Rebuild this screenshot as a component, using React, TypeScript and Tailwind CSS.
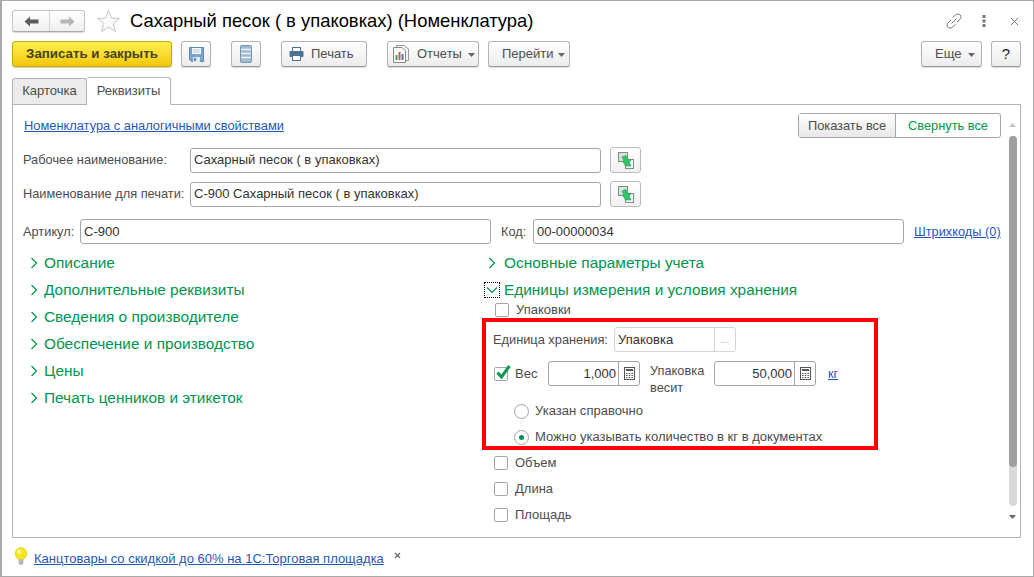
import React from 'react';

const FONT = "font-['Liberation_Sans',Arial,sans-serif]";

const Arrow = ({ flip, color }: { flip?: boolean; color: string }) => (
  <svg width="15" height="11" viewBox="0 0 15 11" className={flip ? 'rotate-180' : ''}>
    <path d="M0.5 5.5 L6 0.5 V3.5 H14.5 V7.5 H6 V10.5 Z" fill={color} />
  </svg>
);

const Caret = ({ className = 'ml-[7px]' }: { className?: string }) => (
  <svg width="7" height="4" viewBox="0 0 7 4" className={`mt-[1px] ${className}`}>
    <path d="M0 0 H7 L3.5 4 Z" fill="#666" />
  </svg>
);

const ToolButton = ({ className = '', children }: { className?: string; children: React.ReactNode }) => (
  <div className={`h-[26px] flex items-center rounded-[3px] border border-[#b4b4b4] border-b-[#999] bg-gradient-to-b from-white to-[#ececec] shadow-[0_1px_1px_rgba(0,0,0,0.15)] text-[13px] text-[#4d4d4d] ${className}`}>
    {children}
  </div>
);

const Field = ({ value, className = '' }: { value: string; className?: string }) => (
  <div className={`h-[25px] flex items-center px-[3px] rounded-[3px] border border-[#a5a5a5] bg-white text-[13px] text-[#333] ${className}`}>
    {value}
  </div>
);

const CopyButton = () => (
  <div className="ml-[9px] w-[31px] h-[26px] flex items-center justify-center rounded-[3px] border border-[#bbb] bg-gradient-to-b from-white to-[#f0f0f0]">
    <svg width="18" height="17" viewBox="0 0 18 17">
      <rect x="1.5" y="0.5" width="9" height="9" fill="#d8e2da" stroke="#7d8f84" />
      <rect x="8.5" y="7.5" width="8" height="9" fill="#f6f8f6" stroke="#7d8f84" />
      <path d="M5 5 L9 3.5 L10 7 L14 8.5 L12 9.5 L14 14 L8.5 14 L5.5 9 L7 8.5 Z" fill="#34c46c" stroke="#1f9a50" strokeWidth="0.6" />
    </svg>
  </div>
);

const Chevron = ({ open }: { open?: boolean }) => (
  <svg width="12" height="12" viewBox="0 0 12 12">
    {open ? (
      <path d="M1 3.5 L6 8.5 L11 3.5" fill="none" stroke="#00954a" strokeWidth="1.2" />
    ) : (
      <path d="M3.5 1 L8.5 6 L3.5 11" fill="none" stroke="#00954a" strokeWidth="1.2" />
    )}
  </svg>
);

const Group = ({ label }: { label: string }) => (
  <div className="h-[27px] flex items-center">
    <span className="w-[21px] pl-[5px] shrink-0"><Chevron /></span>
    <span className="text-[15.4px] text-[#00964f]">{label}</span>
  </div>
);

const Check = ({ label, checked }: { label: string; checked?: boolean }) => (
  <div className="flex items-center">
    <span className="relative w-[14px] h-[14px] rounded-[2px] border border-[#a5a5a5] bg-white shrink-0">
      {checked && (
        <svg width="17" height="16" viewBox="0 0 17 16" className="absolute left-[0px] top-[-4px]">
          <path d="M2.5 8.5 L6.5 13 L14.5 2" fill="none" stroke="#0b9a50" strokeWidth="3" />
        </svg>
      )}
    </span>
    <span className="ml-[7px] text-[13px] text-[#4d4d4d]">{label}</span>
  </div>
);

const Radio = ({ label, on }: { label: string; on?: boolean }) => (
  <div className="h-[26px] flex items-center">
    <span className="w-[15px] h-[15px] rounded-full border border-[#a5a5a5] flex items-center justify-center shrink-0">
      {on && <span className="w-[5px] h-[5px] rounded-full bg-[#0b8f4d]" />}
    </span>
    <span className="ml-[6px] text-[13.05px] text-[#4d4d4d]">{label}</span>
  </div>
);

const Calc = () => (
  <svg width="11" height="13" viewBox="0 0 11 13">
    <rect x="0.5" y="0.5" width="10" height="12" fill="none" stroke="#555" />
    <rect x="2" y="2" width="7" height="2" fill="#555" />
    <path d="M2 6h1.5v1H2zM4.8 6h1.5v1H4.8zM7.5 6H9v1H7.5zM2 8h1.5v1H2zM4.8 8h1.5v1H4.8zM7.5 8H9v1H7.5zM2 10h1.5v1H2zM4.8 10h1.5v1H4.8zM7.5 10H9v1H7.5z" fill="#555" />
  </svg>
);

const NumberField = ({ value, width, inner }: { value: string; width: string; inner: string }) => (
  <div className={`h-[25px] flex rounded-[3px] border border-[#a5a5a5] bg-white text-[13px] text-[#333] ${width}`}>
    <div className={`flex items-center justify-end pr-[2px] border-r border-[#a5a5a5] ${inner}`}>{value}</div>
    <div className="flex-1 flex items-center justify-center"><Calc /></div>
  </div>
);

export default function App() {
  return (
    <div className={`${FONT} w-[1034px] h-[577px] flex flex-col bg-white border border-[#a9a9a9] border-l-2 overflow-hidden`}>
      {/* title */}
      <div className="h-[39px] shrink-0 flex items-center pl-[10px] pr-[14px] pt-[1px]">
        <div className="w-[73px] h-[22px] flex rounded-[3px] border border-[#c4c4c4] border-b-[#aaa] bg-gradient-to-b from-white to-[#f0f0f0] shadow-[0_1px_1px_rgba(0,0,0,0.15)]">
          <div className="w-[37px] flex items-center justify-center border-r border-[#d4d4d4]"><Arrow color="#5c5c5c" /></div>
          <div className="flex-1 flex items-center justify-center"><Arrow flip color="#b5b5b5" /></div>
        </div>
        <svg width="25" height="24" viewBox="0 0 25 24" className="ml-[11px]">
          <path d="M12.5 1.5 L15.5 9 L23.5 9.5 L17.3 14.6 L19.4 22.5 L12.5 18.1 L5.6 22.5 L7.7 14.6 L1.5 9.5 L9.5 9 Z" fill="#fafafa" stroke="#c6c6c6" />
        </svg>
        <div className="ml-[9px] text-[18.4px] text-black">Сахарный песок ( в упаковках) (Номенклатура)</div>
        <div className="ml-auto flex items-center text-[#777]">
          <svg width="16" height="16" viewBox="0 0 16 16" fill="none" stroke="#777" strokeWidth="1">
            <path d="M6.5 4.5 L9.5 1.8 C11 0.6 13 0.8 14.2 2 C15.3 3.3 15.2 5 14 6.2 L11 9" />
            <path d="M9.5 11.5 L6.5 14.2 C5 15.4 3 15.2 1.8 14 C0.7 12.7 0.8 11 2 9.8 L5 7" />
            <path d="M5.5 10.5 L10.5 5.5" />
          </svg>
          <svg width="4" height="12" viewBox="0 0 4 12" className="ml-[20px]">
            <rect x="0.5" width="3" height="3" fill="#777" />
            <rect x="0.5" y="4.5" width="3" height="3" fill="#777" />
            <rect x="0.5" y="9" width="3" height="3" fill="#777" />
          </svg>
          <svg width="9" height="9" viewBox="0 0 9 9" className="ml-[24px]">
            <path d="M1 1 L8 8 M8 1 L1 8" stroke="#777" strokeWidth="1" />
          </svg>
        </div>
      </div>

      {/* toolbar */}
      <div className="h-[26px] mt-[1px] shrink-0 flex items-center pl-[10px] pr-[12px]">
        <div className="w-[160px] h-[26px] flex items-center justify-center rounded-[3px] border border-[#c9a800] bg-gradient-to-b from-[#fff04a] to-[#f2c800] shadow-[0_1px_1px_rgba(0,0,0,0.2)] text-[13.3px] font-bold text-[#4a4211]">
          Записать и закрыть
        </div>
        <ToolButton className="w-[30px] ml-[9px] justify-center">
          <svg width="15" height="15" viewBox="0 0 15 15">
            <path d="M0.5 0.5 H14.5 V14.5 H2.5 L0.5 12.5 Z" fill="#7ba3cd" stroke="#5f88b2" />
            <rect x="3" y="1" width="9" height="6" fill="#f4f8fb" />
            <path d="M4 3 H11 M4 5 H11" stroke="#a9c3dc" strokeWidth="0.8" />
            <rect x="4" y="10" width="7" height="5" fill="#dfe7ef" />
            <rect x="5" y="11" width="2" height="3" fill="#5f88b2" />
          </svg>
        </ToolButton>
        <ToolButton className="w-[30px] ml-[20px] justify-center">
          <svg width="12" height="18" viewBox="0 0 12 18">
            <rect x="0.5" y="0.5" width="11" height="17" rx="1" fill="#9dbbd0" stroke="#7596ae" />
            <path d="M1 4.5 H11 M1 8.5 H11 M1 12.5 H11" stroke="#eef4f8" strokeWidth="1.3" />
          </svg>
        </ToolButton>
        <ToolButton className="w-[86px] ml-[20px] pl-[7px]">
          <svg width="15" height="14" viewBox="0 0 15 14" className="mr-[7px]">
            <rect x="3.5" y="0.5" width="8" height="4" fill="#fff" stroke="#4d7394" />
            <rect x="0.5" y="4" width="14" height="6" rx="1" fill="#4d7394" />
            <rect x="3.5" y="8.5" width="8" height="5" fill="#fff" stroke="#4d7394" />
          </svg>
          Печать
        </ToolButton>
        <ToolButton className="w-[92px] ml-[20px] pl-[5px]">
          <svg width="16" height="18" viewBox="0 0 16 18" className="mr-[8px]">
            <path d="M3.5 0.5 H11 L15.5 4 V15.5 H3.5 Z" fill="#f4f4f4" stroke="#999" />
            <path d="M0.5 2.5 H9 L12.5 6 V17.5 H0.5 Z" fill="#fff" stroke="#888" />
            <rect x="2.5" y="10" width="2" height="5" fill="#3aa655" />
            <rect x="5.5" y="7" width="2" height="8" fill="#d9534f" />
            <rect x="8.5" y="9" width="2" height="6" fill="#3b78b5" />
          </svg>
          Отчеты
          <Caret className="ml-[6px]" />
        </ToolButton>
        <ToolButton className="w-[82px] ml-[9px] pl-[13px]">
          Перейти
          <Caret className="ml-[4px]" />
        </ToolButton>
        <ToolButton className="w-[61px] ml-auto pl-[13px]">
          Еще
          <Caret />
        </ToolButton>
        <ToolButton className="w-[30px] ml-[9px] justify-center !text-[15px] !text-[#222]">?</ToolButton>
      </div>

      {/* tabs */}
      <div className="h-[27px] mt-[10px] shrink-0 flex pl-[10px] text-[13px] text-[#4d4d4d]">
        <div className="w-[75px] mt-[1px] pb-[2px] flex items-center justify-center rounded-t-[3px] border border-b-0 border-[#b4b4b4] bg-[#ececec]">Карточка</div>
        <div className="w-[84px] pb-[1px] flex items-center justify-center rounded-t-[3px] border border-l-0 border-[#b4b4b4] border-b-white bg-white relative z-10 mb-[-1px]">Реквизиты</div>
      </div>

      {/* panel */}
      <div className="ml-[10px] mr-[12px] h-[434px] shrink-0 flex border border-[#b4b4b4] text-[12.8px] text-[#4d4d4d]">
        <div className="flex-1 min-w-0 pl-[10px] pt-[8px]">
          <div className="flex items-start h-[25px]">
            <a className="ml-[1px] text-[12.85px] text-[#1f57b8] underline mt-[3px]">Номенклатура с аналогичными свойствами</a>
            <div className="ml-auto h-[25px] flex rounded-[3px] border border-[#a5a5a5]">
              <div className="w-[97px] flex items-center justify-center border-r border-[#a5a5a5] bg-gradient-to-b from-white to-[#e8e8e8]">Показать все</div>
              <div className="w-[104px] flex items-center justify-center text-[#00964f]">Свернуть все</div>
            </div>
            <div className="w-[4px]" />
          </div>

          <div className="mt-[9px] flex items-center h-[26px]">
            <span className="w-[167px]">Рабочее наименование:</span>
            <Field value="Сахарный песок ( в упаковках)" className="w-[411px]" />
            <CopyButton />
          </div>
          <div className="mt-[8px] flex items-center h-[26px]">
            <span className="w-[167px]">Наименование для печати:</span>
            <Field value="С-900 Сахарный песок ( в упаковках)" className="w-[411px]" />
            <CopyButton />
          </div>
          <div className="mt-[12px] flex items-center h-[25px]">
            <span className="w-[57px]">Артикул:</span>
            <Field value="С-900" className="w-[411px]" />
            <span className="ml-[10px] w-[32px]">Код:</span>
            <Field value="00-00000034" className="w-[371px]" />
            <a className="ml-[10px] text-[#1f57b8] underline">Штрихкоды (0)</a>
          </div>

          <div className="mt-[5px] flex">
            <div className="w-[460px] shrink-0">
              <Group label="Описание" />
              <Group label="Дополнительные реквизиты" />
              <Group label="Сведения о производителе" />
              <Group label="Обеспечение и производство" />
              <Group label="Цены" />
              <Group label="Печать ценников и этикеток" />
            </div>
            <div className="w-[400px]">
              <div className="h-[27px] flex items-center">
                <span className="w-[21px] pl-[3px] shrink-0"><Chevron /></span>
                <span className="text-[15.4px] text-[#00964f]">Основные параметры учета</span>
              </div>
              <div className="h-[27px] flex items-center">
                <span className="w-[16px] h-[16px] ml-[1px] mr-[4px] shrink-0 flex items-center justify-center border border-dotted border-black">
                  <Chevron open />
                </span>
                <span className="text-[15.4px] text-[#00964f]">Единицы измерения и условия хранения</span>
              </div>
              <div className="h-[15px] pl-[12px] mt-[-3px]"><Check label="Упаковки" /></div>

              {/* highlighted block */}
              <div className="w-[396px] h-[132px] mt-[3px] -ml-[1px] border-4 border-[#ff0000] pl-[7px] pt-[5px]">
                <div className="flex items-center h-[25px]">
                  <span className="w-[121px]">Единица хранения:</span>
                  <div className="w-[122px] h-[25px] flex rounded-[3px] border border-[#d4d4d4] text-[13px] text-[#333]">
                    <div className="flex-1 flex items-center px-[3px] border-r border-[#d4d4d4]">Упаковка</div>
                    <div className="w-[20px] flex items-center justify-center text-[10px] text-[#aaa]">...</div>
                  </div>
                </div>
                <div className="flex items-center h-[25px] mt-[9px]">
                  <div className="w-[55px] pl-[1px]"><Check label="Вес" checked /></div>
                  <NumberField value="1,000" width="w-[92px]" inner="w-[70px]" />
                  <span className="ml-[10px] w-[64px] leading-[17px] mt-[11px]">Упаковка весит</span>
                  <NumberField value="50,000" width="w-[102px]" inner="w-[80px]" />
                  <a className="ml-[12px] text-[#1f57b8] underline">кг</a>
                </div>
                <div className="pl-[21px] mt-[12px]">
                  <Radio label="Указан справочно" />
                  <Radio label="Можно указывать количество в кг в документах" on />
                </div>
              </div>

              <div className="pl-[11px] flex flex-col">
                <div className="h-[26px] flex items-center"><Check label="Объем" /></div>
                <div className="h-[26px] flex items-center"><Check label="Длина" /></div>
                <div className="h-[26px] flex items-center"><Check label="Площадь" /></div>
              </div>
            </div>
          </div>
        </div>

        {/* scrollbar */}
        <div className="w-[15px] shrink-0 flex flex-col items-center pt-[18px]">
          <svg width="7" height="4" viewBox="0 0 7 4"><path d="M0 4 H7 L3.5 0 Z" fill="#c4c4c4" /></svg>
          <div className="w-[8px] h-[370px] mt-[9px] rounded-[4px] bg-[#d9d9d9] overflow-hidden">
            <div className="h-[331px] rounded-b-[4px] bg-[#a0a0a0]" />
          </div>
          <svg width="7" height="4" viewBox="0 0 7 4" className="mt-[9px]"><path d="M0 0 H7 L3.5 4 Z" fill="#666" /></svg>
        </div>
      </div>

      {/* footer */}
      <div className="flex-1 flex items-center pl-[12px] pb-[1px]">
        <svg width="14" height="19" viewBox="0 0 14 20">
          <ellipse cx="7" cy="7" rx="6" ry="6.5" fill="#f7e51e" stroke="#d8c200" strokeWidth="0.6" />
          <ellipse cx="5" cy="5" rx="2" ry="2.5" fill="#fdf9b0" />
          <path d="M4.5 13 H9.5 V17 L8 19 H6 L4.5 17 Z" fill="#b8b8b8" />
        </svg>
        <a className="ml-[6px] mt-[5px] text-[13px] text-[#1f57b8] underline">Канцтовары со скидкой до 60% на 1С:Торговая площадка</a>
        <svg width="7" height="7" viewBox="0 0 7 7" className="ml-[10px] mb-[2px]">
          <path d="M1 1 L6 6 M6 1 L1 6" stroke="#666" strokeWidth="1.2" />
        </svg>
      </div>
    </div>
  );
}
